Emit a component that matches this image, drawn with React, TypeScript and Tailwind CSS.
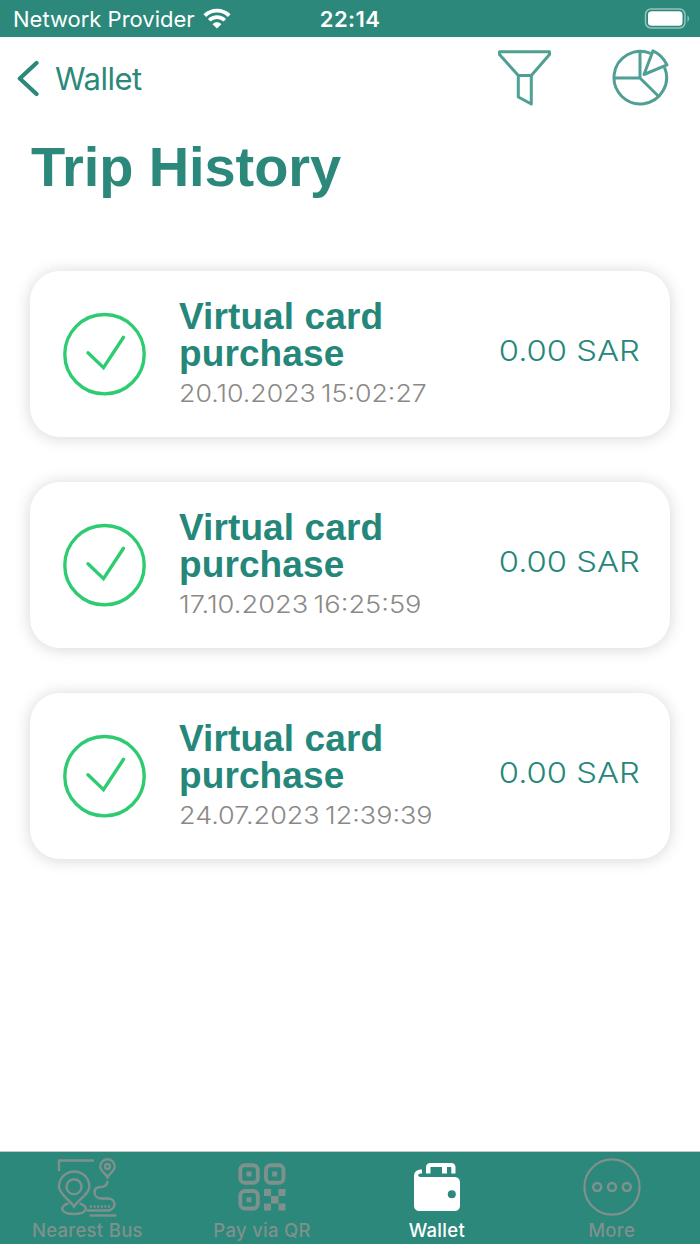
interface Trip {
	id: number;
	title: string;
	date: string;
	amount: string;
	dateClass: string;
}

const trips: Trip[] = [
	{
		id: 1,
		title: "Virtual card purchase",
		date: "20.10.2023 15:02:27",
		amount: "0.00 SAR",
		dateClass: "scale-x-[1.113]",
	},
	{
		id: 2,
		title: "Virtual card purchase",
		date: "17.10.2023 16:25:59",
		amount: "0.00 SAR",
		dateClass: "scale-x-[1.135]",
	},
	{
		id: 3,
		title: "Virtual card purchase",
		date: "24.07.2023 12:39:39",
		amount: "0.00 SAR",
		dateClass: "scale-x-[1.124]",
	},
];

const StatusBar = () => (
	<div className="grid h-[37px] shrink-0 grid-cols-3 items-center bg-[#2b887a] pr-2.5 pl-[13px] text-[22px] text-white leading-none">
		<div className="flex items-center gap-2 whitespace-nowrap">
			<span>Network Provider</span>
			<svg width="28" height="21" viewBox="0 0 28 21" fill="none">
				<path
					d="M1.8 7.6C8.6 1 19.4 1 26.2 7.6"
					stroke="currentColor"
					strokeWidth="3.9"
				/>
				<path
					d="M6.2 12.3c4.4-4.2 11.2-4.2 15.6 0"
					stroke="currentColor"
					strokeWidth="3.6"
				/>
				<path
					d="M9.6 16.2c2.5-2.5 6.3-2.5 8.8 0L14 20.5Z"
					fill="currentColor"
				/>
			</svg>
		</div>
		<span className="pr-[3px] text-center font-semibold tracking-[0.4px]">
			22:14
		</span>
		<svg
			className="justify-self-end"
			width="46"
			height="22"
			viewBox="0 0 46 22"
			fill="none"
		>
			<rect
				x="1.5"
				y="1"
				width="39.5"
				height="19"
				rx="5.5"
				stroke="white"
				strokeOpacity="0.5"
				strokeWidth="1.5"
			/>
			<rect x="4" y="3.3" width="34.5" height="14.4" rx="3.5" fill="white" />
			<path d="M43.5 7.5c2 1.3 2 5.2 0 6.5Z" fill="white" fillOpacity="0.5" />
		</svg>
	</div>
);

const FilterIcon = () => (
	<svg
		width="54"
		height="58"
		viewBox="0 0 54 58"
		fill="none"
		stroke="#4f9f94"
		strokeWidth="3"
		strokeLinejoin="round"
	>
		<path d="M2.5 3.8h50v2.8L34.3 27.5h-13L2.5 6.6Z" />
		<path d="M21.3 27.5V49l13 7V27.5" />
	</svg>
);

const ChartIcon = () => (
	<svg
		width="58"
		height="58"
		viewBox="0 0 58 58"
		fill="none"
		stroke="#4f9f94"
		strokeWidth="3"
		strokeLinejoin="round"
	>
		<path d="M39.6 5.4A26.3 26.3 0 1 0 53.5 19.3" />
		<path d="M29 3.5V30H2.7M29 30l18.2 18" />
		<path d="M33 26.5 42 2.8c5.8 2.7 11 7.8 14 14Z" />
	</svg>
);

const NavBar = () => (
	<header className="flex h-[83px] shrink-0 items-center justify-between pr-[31px] pl-[17px]">
		<button type="button" className="flex items-center gap-4 text-[#2b887a]">
			<svg width="22" height="37" viewBox="0 0 22 37" fill="none">
				<path
					d="M19.5 3 2.8 18.5 19.5 34"
					stroke="currentColor"
					strokeWidth="4.2"
					strokeLinecap="round"
					strokeLinejoin="round"
				/>
			</svg>
			<span className="text-[31px] leading-none tracking-[-0.5px]">Wallet</span>
		</button>
		<div className="flex items-center gap-[60px] pb-1">
			<FilterIcon />
			<ChartIcon />
		</div>
	</header>
);

const TripCard = ({ trip }: { trip: Trip }) => (
	<li className="flex h-[166px] items-center rounded-[30px] bg-white pr-[30px] pl-[33px] shadow-[0_1px_16px_rgba(0,0,0,0.17)]">
		<svg
			className="shrink-0"
			width="83"
			height="84"
			viewBox="0 0 83 84"
			fill="none"
			stroke="#2ecc71"
			strokeWidth="3.4"
			strokeLinecap="round"
		>
			<circle cx="41.5" cy="42.2" r="39.7" />
			<path d="m25 40.7 15.5 15 20-30.4" />
		</svg>
		<div className="ml-[33px] w-[250px] shrink-0 pb-[3px]">
			<h2 className="font-['Liberation_Sans',Arial,sans-serif] font-bold text-[#25877a] text-[37px] leading-[37.5px] tracking-[0.1px]">
				{trip.title}
			</h2>
			<p
				className={`mt-[7px] origin-left whitespace-nowrap font-light text-[#8b8985] text-[24px] leading-7 [word-spacing:-2px] ${trip.dateClass}`}
			>
				{trip.date}
			</p>
		</div>
		<span className="ml-auto origin-right scale-x-[1.13] whitespace-nowrap pb-[7px] font-light text-[#25877a] text-[29px]">
			{trip.amount}
		</span>
	</li>
);

const BusIcon = () => (
	<svg
		width="60"
		height="60"
		viewBox="0 0 60 60"
		fill="none"
		stroke="currentColor"
		strokeWidth="2.4"
	>
		<path d="M2 14V3.5h35" />
		<path d="M17 49.5C12.5 42.5 2 37 2 29.5a15.2 15 0 0 1 30.4 0C32.4 37 21.5 42.5 17 49.5Z" />
		<circle cx="17" cy="29.7" r="7.5" />
		<path d="M11.5 46.5c-10 2.5-8 10.5 5.5 10.5s15.5-8 5.5-10.5" />
		<path d="M50.5 20.3c-2-4-7.2-6-7.2-10.8a7.2 7.2 0 0 1 14.4 0c0 4.8-5.2 6.8-7.2 10.8Z" />
		<circle cx="50.5" cy="9.5" r="2.5" />
		<path d="M50.5 24c0 4-3 6-7 6s-6 2-6 5.5 3 6 7 6h6c5 0 7 3 7 6s-3 6-7 6H30" />
		<path d="M33 49.5h20" strokeDasharray="2 1.6" />
		<path d="M32.5 58.5h27" />
	</svg>
);

const QrIcon = () => (
	<svg width="48" height="48" viewBox="0 0 48 48" fill="currentColor">
		<g fill="none" stroke="currentColor" strokeWidth="3.9">
			<rect x="2.3" y="2.3" width="17.5" height="17.5" rx="4.5" />
			<rect x="28" y="2.3" width="17.5" height="17.5" rx="4.5" />
			<rect x="2.3" y="28" width="17.5" height="17.5" rx="4.5" />
		</g>
		<path d="M8.5 8.5h5v5h-5zM34.2 8.5h5v5h-5zM8.5 34.2h5v5h-5z" />
		<path d="M26 26h7v7h-7zM40.5 26h7v7h-7zM33 33h7.5v7.5H33zM26 40.5h7v7h-7zM40.5 40.5h7v7h-7z" />
	</svg>
);

const WalletIcon = () => (
	<svg width="48" height="50" viewBox="0 0 48 50" fill="none">
		<path
			d="M9 7.5C3.5 7.5 1 10 1 14.5V43c0 4 2 6 6 6h34c4 0 6-2 6-6V21c0-4-2-6-6-6H7.5c-3 0-3-3.5 0-3.5H9Z"
			fill="currentColor"
		/>
		<path
			d="M13 11.5v-6C13 2.5 14.500 1 17.500 1H38c3 0 4.500 1.500 4.500 4.500v6h-4.200V5H34v6.500h-5V5H17.500v6.500Z"
			fill="currentColor"
		/>
		<circle cx="38.8" cy="32.3" r="4" fill="#2b887a" />
	</svg>
);

const MoreIcon = () => (
	<svg
		width="58"
		height="58"
		viewBox="0 0 58 58"
		fill="none"
		stroke="currentColor"
		strokeWidth="2.2"
	>
		<circle cx="29" cy="29" r="27.6" />
		<g strokeWidth="2.5">
			<circle cx="14.2" cy="29" r="4" />
			<circle cx="29" cy="29" r="4" />
			<circle cx="43.8" cy="29" r="4" />
		</g>
	</svg>
);

const tabs = [
	{ label: "Nearest Bus", icon: BusIcon, active: false },
	{ label: "Pay via QR", icon: QrIcon, active: false },
	{ label: "Wallet", icon: WalletIcon, active: true },
	{ label: "More", icon: MoreIcon, active: false },
];

const TabBar = () => (
	<nav className="grid h-[93px] shrink-0 grid-cols-4 border-[#c0c9c7] border-t bg-[#2b887a] pr-px">
		{tabs.map(({ label, icon: Icon, active }) => (
			<button
				key={label}
				type="button"
				className={`flex flex-col items-center pt-1 ${active ? "text-white" : "text-[#7f918d]"}`}
			>
				<span className="flex h-[62px] items-center">
					<Icon />
				</span>
				<span className="whitespace-nowrap font-medium text-[18.5px] leading-6 tracking-[0.3px]">
					{label}
				</span>
			</button>
		))}
	</nav>
);

const App = () => {
	return (
		<div className="flex h-[1244px] w-[700px] flex-col overflow-hidden bg-white font-['Inter',sans-serif]">
			<StatusBar />
			<NavBar />
			<main className="flex-1 px-[30px] pt-[15px]">
				<h1 className="pl-px font-['Liberation_Sans',Arial,sans-serif] font-bold text-[#2b887a] text-[56px] leading-[64px] tracking-[-0.1px]">
					Trip History
				</h1>
				<ul className="mt-[72px] flex flex-col gap-[45px]">
					{trips.map((trip) => (
						<TripCard key={trip.id} trip={trip} />
					))}
				</ul>
			</main>
			<TabBar />
		</div>
	);
};

export default App;
